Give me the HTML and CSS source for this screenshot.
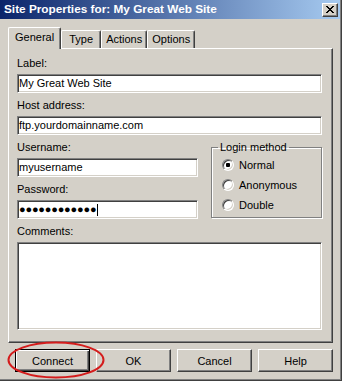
FILE: index.html
```html
<!DOCTYPE html>
<html lang="en">
<head>
    <meta charset="UTF-8">
    <title>Site Properties</title>
    <link rel="stylesheet" href="styles.css">
</head>
<body>
    <div class="window">
        <div class="titlebar">
            <span class="title">Site Properties for: My Great Web Site</span>
            <button class="close" type="button">
                <svg width="8" height="7" viewBox="0 0 8 7" shape-rendering="crispEdges">
                    <path d="M0 0h2v1H0zM6 0h2v1H6zM1 1h2v1H1zM5 1h2v1H5zM2 2h4v1H2zM3 3h2v1H3zM2 4h4v1H2zM1 5h2v1H1zM5 5h2v1H5zM0 6h2v1H0zM6 6h2v1H6z" fill="#000"/>
                </svg>
            </button>
        </div>

        <div class="content">
            <div class="tabs">
                <div class="tab active">General</div>
                <div class="tab">Type</div>
                <div class="tab">Actions</div>
                <div class="tab">Options</div>
            </div>

            <div class="panel">
                <div class="group">
                    <div class="label">Label:</div>
                    <div class="field">My Great Web Site</div>
                </div>
                <div class="group">
                    <div class="label">Host address:</div>
                    <div class="field">ftp.yourdomainname.com</div>
                </div>

                <div class="row">
                    <div class="col">
                        <div class="group">
                            <div class="label">Username:</div>
                            <div class="field">myusername</div>
                        </div>
                        <div class="group">
                            <div class="label">Password:</div>
                            <div class="field"><span class="dots">●●●●●●●●●●●●</span><span class="caret"></span></div>
                        </div>
                    </div>
                    <fieldset class="login">
                        <legend>Login method</legend>
                        <div class="radio-row"><span class="radio checked"></span>Normal</div>
                        <div class="radio-row"><span class="radio"></span>Anonymous</div>
                        <div class="radio-row"><span class="radio"></span>Double</div>
                    </fieldset>
                </div>

                <div class="label">Comments:</div>
                <div class="field memo"></div>
            </div>

            <div class="buttons">
                <button class="btn default" type="button">Connect</button>
                <button class="btn" type="button">OK</button>
                <button class="btn" type="button">Cancel</button>
                <button class="btn" type="button">Help</button>
                <svg class="ring" width="98" height="38" viewBox="0 0 98 38">
                    <ellipse cx="49" cy="19" rx="47.5" ry="17.5" fill="none" stroke="#d41c1c" stroke-width="2"/>
                </svg>
            </div>
        </div>
    </div>
</body>
</html>
```

FILE: styles.css
```css
body {
    margin: 0;
    background-color: #d4d0c8;
    font-family: "Liberation Sans", Arial, sans-serif;
    font-size: 11px;
    color: #000;
}
.window {
    width: 342px;
    height: 381px;
    box-sizing: border-box;
    background-color: #d4d0c8;
    border-right: 1px solid #404040;
    border-bottom: 1px solid #404040;
    box-shadow: inset -1px -1px 0 #808080;
}
.titlebar {
    height: 19px;
    margin-right: 1px;
    display: flex;
    align-items: center;
    justify-content: space-between;
    padding: 0 2px 0 4px;
    background: linear-gradient(to right, #0a246a, #a6caf0);
}
.title {
    color: #fff;
    font-weight: bold;
    font-size: 11.8px;
    line-height: 19px;
    white-space: nowrap;
}
.close {
    width: 16px;
    height: 14px;
    padding: 0;
    display: flex;
    align-items: center;
    justify-content: center;
    background-color: #d4d0c8;
    border: 1px solid;
    border-color: #fff #404040 #404040 #fff;
    box-shadow: inset -1px -1px 0 #808080;
}
.content {
    padding: 8px 8px 0 8px;
}
.tabs {
    display: flex;
    align-items: flex-end;
    height: 21px;
}
.tab {
    height: 18px;
    box-sizing: border-box;
    min-width: 40px;
    padding: 2px 4px 0;
    text-align: center;
    line-height: 13px;
    border: 1px solid;
    border-bottom: none;
    border-color: #fff #404040 #fff #fff;
    border-radius: 2px 2px 0 0;
    box-shadow: inset -1px 0 0 #808080;
}
.tab.active {
    height: 22px;
    margin-bottom: -1px;
    padding: 3px 6px 0;
    position: relative;
    z-index: 1;
    background-color: #d4d0c8;
}
.panel {
    height: 295px;
    box-sizing: border-box;
    padding: 8px 10px 0 8px;
    border: 1px solid;
    border-color: #fff #404040 #404040 #fff;
    box-shadow: inset -1px -1px 0 #808080;
}
.label {
    line-height: 13px;
    margin-bottom: 4px;
}
.group {
    margin-bottom: 6px;
}
.field {
    height: 19px;
    box-sizing: border-box;
    padding-left: 1px;
    line-height: 15px;
    background-color: #fff;
    border: 1px solid;
    border-color: #808080 #fff #fff #808080;
    box-shadow: inset 1px 1px 0 #404040, inset -1px -1px 0 #d4d0c8;
    white-space: nowrap;
    display: flex;
    align-items: center;
}
.dots {
    letter-spacing: -0.2px;
}
.caret {
    width: 1px;
    height: 12px;
    margin-left: 1px;
    background-color: #000;
}
.row {
    display: flex;
    gap: 13px;
}
.col {
    width: 181px;
}
.login {
    flex: 1;
    margin: 0 0 7px 0;
    padding: 1px 0 0 10px;
    border: 1px solid #808080;
    box-shadow: inset 1px 1px 0 #fff, 1px 1px 0 #fff;
}
.login legend {
    margin-left: -4px;
    padding: 0 2px;
    line-height: 13px;
}
.radio-row {
    display: flex;
    align-items: center;
    height: 20px;
}
.radio {
    width: 12px;
    height: 12px;
    box-sizing: border-box;
    margin-right: 5px;
    border-radius: 50%;
    border: 1px solid;
    border-color: #808080 #fff #fff #808080;
    box-shadow: inset 1px 1px 0 #404040, inset -1px -1px 0 #d4d0c8;
    background-color: #fff;
}
.radio.checked {
    background: radial-gradient(circle, #000 0, #000 2px, #fff 2.5px);
}
.memo {
    height: 88px;
}
.buttons {
    position: relative;
    display: flex;
    justify-content: flex-end;
    gap: 6px;
    margin-top: 6px;
}
.btn {
    width: 75px;
    height: 23px;
    padding: 0;
    font-family: "Liberation Sans", Arial, sans-serif;
    font-size: 11px;
    color: #000;
    background-color: #d4d0c8;
    border: 1px solid;
    border-color: #fff #404040 #404040 #fff;
    box-shadow: inset -1px -1px 0 #808080;
}
.btn.default {
    border-color: #000;
    box-shadow: inset 1px 1px 0 #fff, inset -1px -1px 0 #404040, inset -2px -2px 0 #808080;
}
.ring {
    position: absolute;
    left: -1px;
    top: -8px;
}
```
